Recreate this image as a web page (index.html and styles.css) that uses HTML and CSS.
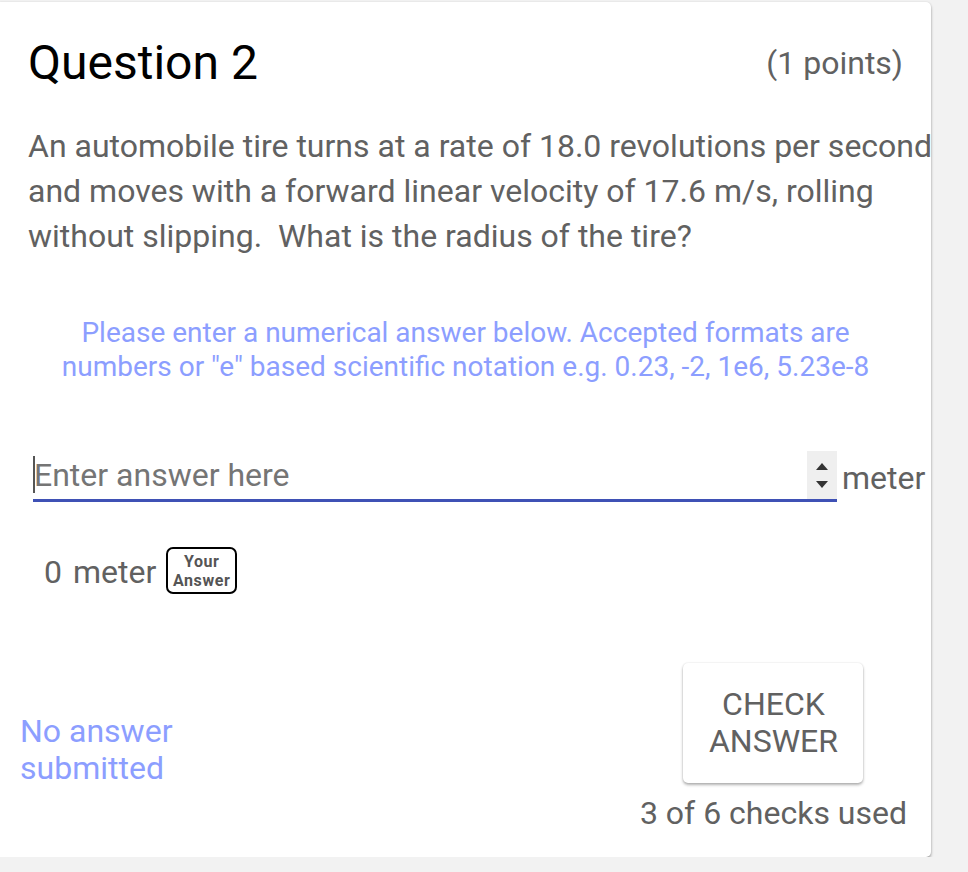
FILE: index.html
```html
<!DOCTYPE html>
<html lang="en">
<head>
<meta charset="utf-8">
<title>Question 2</title>
<link rel="stylesheet" href="styles.css">
</head>
<body>
<div class="card">
  <div class="header">
    <h2 class="title">Question 2</h2>
    <span class="points">(1 points)</span>
  </div>
  <p class="question">An automobile tire turns at a rate of 18.0 revolutions per second<br>and moves with a forward linear velocity of 17.6 m/s, rolling<br>without slipping.&nbsp; What is the radius of the tire?</p>
  <p class="hint">Please enter a numerical answer below. Accepted formats are<br>numbers or "e" based scientific notation e.g. 0.23, -2, 1e6, 5.23e-8</p>
  <div class="answer-row">
    <div class="field">
      <span class="caret"></span>
      <input class="field-input" type="text" placeholder="Enter answer here">
      <span class="spinner">
        <svg width="14" height="9" viewBox="0 0 14 9"><path d="M7 1 L13 8 L1 8 Z" fill="#333"/></svg>
        <svg width="14" height="9" viewBox="0 0 14 9"><path d="M1 1 L13 1 L7 8 Z" fill="#333"/></svg>
      </span>
    </div>
    <span class="unit">meter</span>
  </div>
  <div class="current">
    <span class="current-value">0 meter</span>
    <span class="badge">Your<br>Answer</span>
  </div>
  <div class="footer">
    <div class="status">No answer<br>submitted</div>
    <div class="actions">
      <button class="check-btn" type="button">CHECK ANSWER</button>
      <div class="checks">3 of 6 checks used</div>
    </div>
  </div>
</div>
</body>
</html>
```
FILE: styles.css
```css
html, body {
  margin: 0;
  padding: 0;
}
body {
  background: #f2f2f2;
  font-family: Roboto, "Liberation Sans", Arial, sans-serif;
  color: #616161;
}
.card {
  box-sizing: border-box;
  width: 931px;
  height: 855px;
  margin-top: 2px;
  background: #fff;
  border-radius: 0 5px 5px 0;
  box-shadow: 0 2px 3px rgba(0,0,0,0.35), 0 0 2px rgba(0,0,0,0.1);
  padding-top: 33px;
}
.header {
  display: flex;
  justify-content: space-between;
  align-items: flex-start;
  padding: 0 28px;
}
.title {
  margin: 0;
  font-size: 48px;
  font-weight: 400;
  line-height: 56px;
  color: #000;
}
.points {
  font-size: 32px;
  line-height: 56px;
  color: #616161;
}
.question {
  margin: 33px 0 0 0;
  padding-left: 28px;
  font-size: 32px;
  line-height: 44.8px;
  white-space: nowrap;
}
.hint {
  margin: 58px 0 0 0;
  text-align: center;
  font-size: 28px;
  line-height: 34px;
  color: #8c9eff;
}
.answer-row {
  display: flex;
  align-items: flex-end;
  margin-top: 67px;
  padding-left: 33px;
}
.field {
  position: relative;
  display: flex;
  width: 804px;
  border-bottom: 3px solid #3f51b5;
}
.field-input {
  flex: 1;
  min-width: 0;
  height: 48px;
  padding: 0 0 0 1px;
  margin: 0;
  border: 0;
  outline: none;
  background: transparent;
  font-family: Roboto, "Liberation Sans", Arial, sans-serif;
  font-size: 32px;
  color: #333;
}
.field-input::placeholder {
  color: #757575;
  opacity: 1;
}
.caret {
  position: absolute;
  left: 0;
  top: 5px;
  width: 2px;
  height: 37px;
  background: #555;
}
.spinner {
  display: flex;
  flex-direction: column;
  justify-content: center;
  align-items: center;
  gap: 9px;
  width: 30px;
  height: 48px;
  background: #efefef;
}
.spinner svg {
  display: block;
}
.unit {
  margin: 0 0 5px 5px;
  font-size: 32px;
  line-height: normal;
}
.current {
  display: flex;
  align-items: center;
  margin-top: 45px;
  padding-left: 44px;
}
.current-value {
  font-size: 32px;
  line-height: 37px;
  padding-top: 3px;
  word-spacing: 3px;
}
.badge {
  margin-left: 10px;
  box-sizing: border-box;
  width: 71px;
  height: 47px;
  padding-top: 3px;
  border: 2px solid #000;
  border-radius: 7px;
  text-align: center;
  font-size: 16px;
  font-weight: 700;
  line-height: 19px;
  letter-spacing: 0.6px;
  color: #555;
  white-space: nowrap;
}
.footer {
  display: flex;
  justify-content: space-between;
  align-items: flex-start;
  margin-top: 69px;
  padding: 0 24px 0 20px;
}
.status {
  margin-top: 50px;
  font-size: 32px;
  line-height: 37px;
  color: #8c9eff;
}
.actions {
  display: flex;
  flex-direction: column;
  align-items: center;
}
.check-btn {
  box-sizing: border-box;
  width: 180px;
  height: 120px;
  padding: 0 20px;
  border: 0;
  border-radius: 5px;
  background: #fff;
  box-shadow: 0 2px 3px rgba(0,0,0,0.3), 0 0 2px rgba(0,0,0,0.12);
  font-family: Roboto, "Liberation Sans", Arial, sans-serif;
  font-size: 32px;
  line-height: 37px;
  color: #616161;
}
.checks {
  margin-top: 12px;
  font-size: 32px;
  line-height: 37.5px;
}
```
